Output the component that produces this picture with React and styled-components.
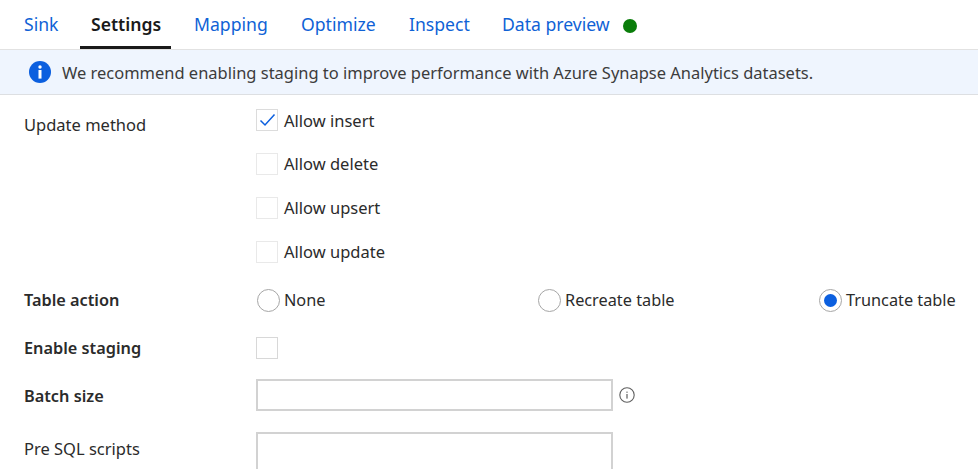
import React from "react";
import styled, { createGlobalStyle } from "styled-components";

const Global = createGlobalStyle`
  html, body { margin: 0; padding: 0; background: #fff; }
  body { font-family: "Noto Sans", "Open Sans", sans-serif; font-size: 16px; color: #2b2b2b; overflow: hidden; }
`;
const Page = styled.div`width: 978px; height: 469px; overflow: hidden; display: flex; flex-direction: column;`;
const TabBar = styled.div`display: flex; flex: none; height: 49px; padding-left: 13px; align-items: stretch; box-sizing: border-box;`;
const Tab = styled.div`
  box-sizing: border-box;
  width: ${p => p.$w}px;
  margin-left: ${p => p.$gap || 0}px;
  padding-left: 11px;
  padding-top: 12px;
  font-size: 17.6px;
  line-height: 24px;
  color: ${p => (p.$active ? "#1a1a1a" : "#0f62d6")};
  font-weight: ${p => (p.$active ? 600 : 400)};
  border-bottom: 3px solid ${p => (p.$active ? "#1a1a1a" : "transparent")};
  white-space: nowrap;
`;
const Dot = styled.span`width: 14px; height: 14px; border-radius: 50%; background: #0a7d0a; align-self: center; margin: 3px 0 0 12px;`;
const Banner = styled.div`
  flex: none; height: 46px; box-sizing: border-box; background: #eff5fe;
  border-top: 1px solid #e2e2e2; border-bottom: 1px solid #dddfe2;
  display: flex; align-items: center; padding-left: 29px; gap: 11px;
  font-size: 16.48px; color: #3c3c3c; white-space: nowrap;
`;
const Form = styled.div`display: flex; flex: none; flex-direction: column; padding: 0 0 0 24px;`;
const Row = styled.div`display: grid; grid-template-columns: 232px 1fr; height: ${p => p.$h}px; align-items: center;`;
const TopRow = styled(Row)`align-items: start;`;
const Label = styled.div`font-size: ${p => (p.$bold ? 16.3 : 16.5)}px; line-height: 22px; font-weight: ${p => (p.$bold ? 600 : 400)}; color: #2b2b2b; ${p => p.$top && `align-self: start; padding-top: ${p.$top}px;`}`;
const Stack = styled.div`display: flex; flex-direction: column; padding-top: 14px;`;
const CheckRow = styled.div`display: flex; height: 44px; gap: 6px; font-size: 16.5px; align-items: flex-start; line-height: ${p => (p.$first ? 24 : 22)}px;`;
const Box = styled.span`
  width: 22px; height: 22px; box-sizing: border-box; border: 1.5px solid ${p => p.$c || "#e9e9e9"};
  display: flex; align-items: center; justify-content: center; flex: none;
`;
const Radios = styled.div`display: grid; grid-template-columns: repeat(3, 281px); padding-left: 1px;`;
const RadioItem = styled.div`display: flex; align-items: center; gap: 4px; font-size: 16.3px; white-space: nowrap;`;
const Radio = styled.span`
  width: 23px; height: 23px; box-sizing: border-box; border-radius: 50%; border: 1.5px solid #a6a6a6; flex: none;
  display: flex; align-items: center; justify-content: center;
  &::after { content: ""; width: 13px; height: 13px; border-radius: 50%; background: ${p => (p.$on ? "#0b5fdf" : "transparent")}; }
`;
const InputRow = styled.div`display: flex; align-items: center; gap: 6px; margin-top: -2px;`;
const Input = styled.div`width: 357px; height: ${p => p.$h || 32}px; box-sizing: border-box; border: 2px solid #d2d2d2; background: #fff; ${p => p.$open && "border-bottom: none;"}`;
const Clip = styled.div`align-self: start; height: 37px; padding-top: 12px;`;

const InfoFilled = () => (
  <svg width="22" height="22" viewBox="0 0 22 22"><circle cx="11" cy="11" r="11" fill="#0b5fdf"/><circle cx="11" cy="6" r="1.7" fill="#fff"/><rect x="9.5" y="9" width="3" height="8.6" fill="#fff"/></svg>
);
const InfoLine = () => (
  <svg width="16" height="16" viewBox="0 0 16 16"><circle cx="8" cy="8" r="7.2" fill="none" stroke="#5f5f5f" strokeWidth="1.1"/><rect x="7.4" y="7" width="1.2" height="4.6" fill="#5f5f5f"/><rect x="7.4" y="4.6" width="1.2" height="1.2" fill="#5f5f5f"/></svg>
);
const Check = () => (
  <svg width="17" height="14" viewBox="0 0 17 14"><path d="M1.5 7.5 L6 12 L15.5 1.5" fill="none" stroke="#0b5fdf" strokeWidth="1.5"/></svg>
);

export default function App() {
  return (
    <Page>
      <Global />
      <TabBar>
        <Tab $w={67}>Sink</Tab>
        <Tab $w={91} $active>Settings</Tab>
        <Tab $w={107} $gap={12}>Mapping</Tab>
        <Tab $w={108}>Optimize</Tab>
        <Tab $w={93}>Inspect</Tab>
        <Tab $w={120}>Data preview</Tab>
        <Dot />
      </TabBar>
      <Banner><InfoFilled />We recommend enabling staging to improve performance with Azure Synapse Analytics datasets.</Banner>
      <Form>
        <TopRow $h={181}>
          <Label $top={19}>Update method</Label>
          <Stack>
            <CheckRow $first><Box $c="#dcdcdc"><Check /></Box>Allow insert</CheckRow>
            <CheckRow><Box />Allow delete</CheckRow>
            <CheckRow><Box />Allow upsert</CheckRow>
            <CheckRow><Box />Allow update</CheckRow>
          </Stack>
        </TopRow>
        <Row $h={48}>
          <Label $bold>Table action</Label>
          <Radios>
            <RadioItem><Radio />None</RadioItem>
            <RadioItem><Radio />Recreate table</RadioItem>
            <RadioItem><Radio $on />Truncate table</RadioItem>
          </Radios>
        </Row>
        <Row $h={48}>
          <Label $bold>Enable staging</Label>
          <Box $c="#d8d8d8" />
        </Row>
        <Row $h={48}>
          <Label $bold>Batch size</Label>
          <InputRow><Input /><InfoLine /></InputRow>
        </Row>
        <Row $h={49}>
          <Label $top={18}>Pre SQL scripts</Label>
          <Clip><Input $h={37} $open /></Clip>
        </Row>
      </Form>
    </Page>
  );
}
